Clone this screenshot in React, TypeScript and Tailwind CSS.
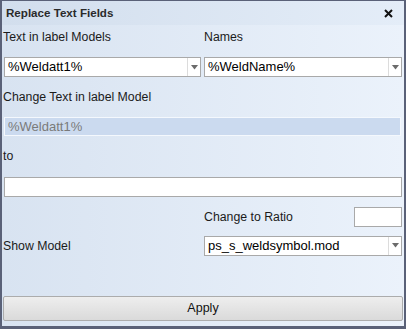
import React from 'react';

function Arrow() {
  return (
    <svg width="7" height="5" viewBox="0 0 7 5">
      <path d="M0 0 H7 L3.5 4.5 Z" fill="#6b6b6b" />
    </svg>
  );
}

function Combo({ value }: { value: string }) {
  return (
    <div className="flex h-[20px] items-stretch border border-[#a9a9a9] bg-white">
      <div className="flex flex-1 items-center pl-[3px] text-[13px] text-black">{value}</div>
      <div className="flex w-[13px] items-center justify-center border-l border-[#dcdcdc]">
        <Arrow />
      </div>
    </div>
  );
}

export default function App() {
  return (
    <div
      className="flex h-[329px] w-[406px] flex-col border-t border-b-[3px] border-l-2 border-r-2 border-[#5a6178] bg-gradient-to-r from-[#d8e3f1] to-[#ebf2fb] text-[12.3px] text-[#1b1b1b]"
      style={{ fontFamily: '"Liberation Sans", Arial, sans-serif' }}
    >
      {/* Title bar */}
      <div className="flex h-[24px] shrink-0 items-center justify-between bg-gradient-to-r from-[#d2deed] to-[#e4edf8] pl-[4px] pr-[11px]">
        <span className="text-[11.6px] font-bold text-[#2a2a2a]">Replace Text Fields</span>
        <svg width="9" height="9" viewBox="0 0 9 9">
          <path d="M1 1 L8 8 M8 1 L1 8" stroke="#111" strokeWidth="2" />
        </svg>
      </div>

      <div className="flex flex-1 flex-col px-[2px]">
        <div className="mt-[3px] grid h-[16px] grid-cols-[197px_198px] items-center gap-x-[3px]">
          <span className="-ml-[1px]">Text in label Models</span>
          <span>Names</span>
        </div>

        <div className="mt-[13px] grid grid-cols-[197px_198px] gap-x-[3px]">
          <Combo value="%Weldatt1%" />
          <Combo value="%WeldName%" />
        </div>

        <div className="-ml-[1px] mt-[12px] flex h-[16px] items-center">Change Text in label Model</div>

        <div className="mt-[12px] flex h-[19px] w-[397px] items-center border border-[#f4f8fd] bg-[#cbdaef] pl-[3px] text-[13px] text-[#7a7a7a]">
          %Weldatt1%
        </div>

        <div className="-ml-[1px] mt-[12px] flex h-[16px] items-center">to</div>

        <div className="mt-[13px] h-[20px] border border-[#a9a9a9] bg-white" />

        <div className="mt-[10px] grid h-[20px] grid-cols-[197px_198px] items-center gap-x-[3px]">
          <span />
          <div className="flex items-center justify-between">
            <span>Change to Ratio</span>
            <div className="h-[20px] w-[48px] border border-[#a9a9a9] bg-white" />
          </div>
        </div>

        <div className="mt-[8px] grid h-[21px] grid-cols-[197px_198px] items-center gap-x-[3px]">
          <span className="-ml-[1px] mt-[2px]">Show Model</span>
          <Combo value="ps_s_weldsymbol.mod" />
        </div>

        <button className="mb-[5px] mt-auto -mx-[1px] flex h-[25px] items-center justify-center rounded-[2px] border border-[#acacac] bg-gradient-to-b from-[#eeeeee] to-[#dadada] text-[12.5px] text-[#111]">
          Apply
        </button>
      </div>
    </div>
  );
}
